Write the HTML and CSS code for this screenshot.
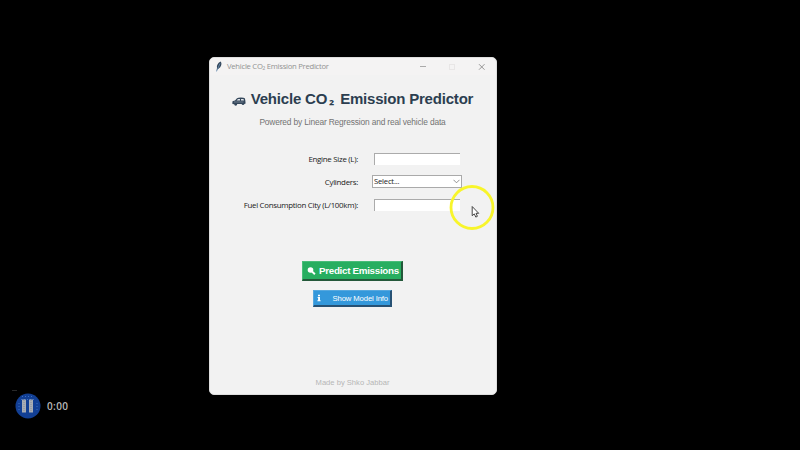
FILE: index.html
```html
<!DOCTYPE html>
<html lang="en">
<head>
<meta charset="utf-8">
<title>Vehicle CO₂ Emission Predictor</title>
<link rel="stylesheet" href="styles.css">
</head>
<body>
<main class="window">
  <header class="titlebar">
    <svg class="feather" width="8" height="11" viewBox="0 0 8 11"><path d="M1.4 10.5 L2 7 Q1.2 3 5.6.5 Q7.5 2.8 5.2 6.2 L2.5 8.4Z" fill="#32465a"/><path d="M1.5 10.5 L5 2.5" stroke="#78a0c8" stroke-width=".7"/></svg>
    <span class="caption">Vehicle CO₂ Emission Predictor</span>
    <svg class="controls" width="66" height="8" viewBox="0 0 66 8" fill="none"><path d="M0 3.5H6" stroke="#aaa"/><rect x="29.5" y="1.5" width="5" height="5" stroke="#e8e6e6"/><path d="M59 1.2L64.5 6.7M64.5 1.2L59 6.7" stroke="#8a8a8a" stroke-width=".9"/></svg>
  </header>
  <h1 class="heading">
    <svg class="car" width="14" height="10" viewBox="0 0 14 10"><path d="M.4 8V5.6Q.6 4.7 3 4.4L5 2.3Q6 1.6 9 1.6 12 1.6 12.8 2.2 13.6 4 13.6 7.5L12.4 8A1.5 1.5 0 0 1 9.6 8.1H5.2A1.5 1.5 0 0 1 2.2 8.2Z" fill="#34475b"/><path d="M4.6 4.4L6 3H8V4.4ZM9 3H11.5L12 4.4H9Z" fill="#dfe3e8"/><path d="M2 6H11.5" stroke="#8996a3" stroke-width=".7"/></svg>
    <span>Vehicle CO</span><span class="sub">₂</span><span>Emission Predictor</span>
  </h1>
  <p class="tagline">Powered by Linear Regression and real vehicle data</p>
  <form class="fields">
    <span class="label">Engine Size (L):</span><span class="entry"></span>
    <span class="label">Cylinders:</span>
    <span class="combo"><span>Select...</span><svg width="7" height="5" viewBox="0 0 7 5"><path d="M.5.8L3.5 3.8 6.5.8" fill="none" stroke="#777" stroke-width=".8"/></svg></span>
    <span class="label">Fuel Consumption City (L/100km):</span><span class="entry"></span>
  </form>
  <div class="button predict">
    <svg width="9" height="9" viewBox="0 0 9 9"><circle cx="3.5" cy="4" r="2.8" fill="#fff"/><path d="M5 5.5L7.9 8.2" stroke="#fff" stroke-width="1.9"/></svg>
    <span>Predict Emissions</span>
  </div>
  <div class="button info">
    <svg width="4" height="8" viewBox="0 0 4 8"><path d="M1 .8H3V2.2H1ZM.6 3H3V6.3H3.6V7.3H.4V6.3H1.1V4H.6Z" fill="#fff"/></svg>
    <span>Show Model Info</span>
  </div>
  <footer class="credit">Made by Shko Jabbar</footer>
</main>
<div class="recorder">
  <svg width="26" height="26" viewBox="0 0 26 26"><circle cx="13" cy="13" r="12.5" fill="#123f94"/><path d="M6 6.5H20M7 3.5H19M4 10V17M22 10V17" stroke="#3b70c4" stroke-dasharray="1 2"/><path d="M7 6.5H11V19.5H7ZM14 6.5H18V19.5H14Z" fill="#a8adb5"/><path d="M9 7V19M16 7V19" stroke="#7c8593" stroke-width=".7" stroke-dasharray="1 1"/></svg>
  <span>0:00</span>
</div>
<span class="speck"></span>
<svg class="pointer" width="46" height="46" viewBox="0 0 46 46"><circle cx="23" cy="22.5" r="21" fill="none" stroke="#f8f52b" stroke-width="2.8"/><path d="M23.2 21.5V30.7L25.3 28.9 26.8 32.1 28.4 31.3 27 28.3H29.7Z" fill="#fff" stroke="#333" stroke-width=".9"/></svg>
</body>
</html>
```

FILE: styles.css
```css
* { box-sizing: border-box; }
body {
  margin: 0;
  height: 450px;
  padding-top: 57px;
  overflow: hidden;
  background: #000;
  font-family: "Liberation Sans", Arial, sans-serif;
}
.window {
  display: flex;
  flex-direction: column;
  align-items: center;
  width: 288px;
  height: 338px;
  margin-left: 209px;
  padding-right: 1px;
  border: 1px solid #dedede;
  border-radius: 5px;
  background: #f2f2f2;
}
.titlebar {
  display: flex;
  align-items: center;
  width: 100%;
  height: 17px;
  padding: 0 9px 0 5px;
  border-radius: 4px 4px 0 0;
  background: #f4f3f3;
}
.caption {
  margin-left: 4px;
  color: #929292;
  font: 7.7px/17px "Open Sans", sans-serif;
  letter-spacing: -0.27px;
  white-space: nowrap;
}
.controls { margin-left: auto; }
.heading {
  display: flex;
  align-items: center;
  height: 20px;
  margin: 14px 0 0;
  color: #2c3e50;
  font-size: 15px;
  line-height: 20px;
  letter-spacing: -0.2px;
  white-space: nowrap;
}
.car { margin: 3px 5px 0 0; }
.sub {
  width: 9px;
  margin-right: 4px;
  text-align: center;
  font-family: "Open Sans", sans-serif;
  font-size: 14px;
}
.tagline {
  height: 12px;
  margin: 7px 0 0;
  color: #737373;
  font-size: 8.4px;
  line-height: 12px;
  letter-spacing: -0.16px;
  white-space: nowrap;
}
.fields {
  display: grid;
  grid-template-columns: 148px 90px;
  grid-auto-rows: 23px;
  column-gap: 14px;
  align-items: center;
  align-self: flex-start;
  margin-top: 19px;
}
.label {
  color: #202020;
  font: 7.9px/12px "Open Sans", sans-serif;
  letter-spacing: -0.29px;
  text-align: right;
  white-space: nowrap;
}
.entry {
  justify-self: center;
  width: 86px;
  height: 12px;
  border: solid #ababab;
  border-width: 1px 0 0 1px;
  background: #fff;
}
.combo {
  display: flex;
  align-items: center;
  justify-content: space-between;
  height: 13px;
  padding: 0 1px;
  border: 1px solid #aaa;
  background: #fff;
  color: #202020;
  font: 7.7px/11px "Open Sans", sans-serif;
  letter-spacing: -0.22px;
}
.button {
  display: flex;
  align-items: center;
  border: solid;
  color: #fff;
  white-space: nowrap;
}
.predict {
  width: 101px;
  height: 20px;
  margin-top: 45px;
  padding-left: 4px;
  gap: 3px;
  border-width: 1px 2px 2px 1px;
  border-color: #48bd79 #24583a #24583a #48bd79;
  background: #27ae60;
  font-size: 9.8px;
  font-weight: bold;
  letter-spacing: -0.3px;
}
.info {
  justify-content: space-between;
  width: 79px;
  height: 17px;
  margin-top: 9px;
  padding: 0 2px 0 3px;
  border-width: 1px 2px 2px 1px;
  border-color: #56a8df #275174 #275174 #56a8df;
  background: #3498db;
  font-size: 7.7px;
  letter-spacing: -0.12px;
}
.credit {
  margin-top: 70px;
  color: #b6b6b6;
  font-size: 7.6px;
  line-height: 12px;
}
.recorder {
  display: flex;
  align-items: center;
  gap: 6px;
  margin: -2px 0 0 15px;
  color: #b8b8b8;
  font: 600 10px/14px "Open Sans", sans-serif;
  letter-spacing: 0.35px;
}
.speck { position: absolute; left: 12px; top: 390px; width: 5px; height: 1px; background: #292929; }
.pointer { position: absolute; left: 449px; top: 185px; }
```
